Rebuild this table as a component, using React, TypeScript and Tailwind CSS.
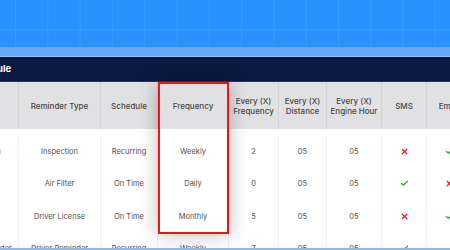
import { Check, X } from 'lucide-react';

type Row = {
    name: string;
    type: string;
    schedule: string;
    frequency: string;
    everyFreq: string;
    distance: string;
    engine: string;
    sms: boolean;
    email: boolean;
};

const rows: Row[] = [
    { name: 'Inspection Plan', type: 'Inspection', schedule: 'Recurring', frequency: 'Weekly', everyFreq: '2', distance: '05', engine: '05', sms: false, email: true },
    { name: 'Air Filter', type: 'Air Filter', schedule: 'On Time', frequency: 'Daily', everyFreq: '0', distance: '05', engine: '05', sms: true, email: false },
    { name: 'Renew License', type: 'Driver License', schedule: 'On Time', frequency: 'Monthly', everyFreq: '5', distance: '05', engine: '05', sms: false, email: true },
    { name: 'Fleet Driver Reminder', type: 'Driver Reminder', schedule: 'Recurring', frequency: 'Weekly', everyFreq: '7', distance: '05', engine: '05', sms: true, email: true },
];

const cols = 'grid grid-cols-[90px_82px_57px_71px_50px_48px_55px_45px_45px_60px]';

const Mark = ({ ok }: { ok: boolean }) =>
    ok ? (
        <Check className="w-[9px] h-[9px] text-[#3aa63a]" strokeWidth={3.5} />
    ) : (
        <X className="w-[9px] h-[9px] text-[#f01c1c]" strokeWidth={3.5} />
    );

const headers = ['Name', 'Reminder Type', 'Schedule', 'Frequency', 'Every (X)|Frequency', 'Every (X)|Distance', 'Every (X)|Engine Hour', 'SMS', 'Email', 'Action'];

export default function App() {
    return (
        <div className="w-[450px] h-[250px] overflow-hidden bg-white font-['Inter',sans-serif]">
            {/* blue hero with faint grid */}
            <div className="h-[47px] bg-[#2893fd] bg-[linear-gradient(to_right,rgba(255,255,255,0.08)_1px,transparent_1px),linear-gradient(to_bottom,rgba(255,255,255,0.08)_1px,transparent_1px)] bg-[size:32.3px_32px] bg-[position:15px_29px]" />
            <div className="h-[10px] bg-[#68a9f1] border-b border-[#8fc0f6]" />

            <div className="relative ml-[-71px]">
                <div className="h-[25px] bg-[#0a1940] flex items-center border-b border-[#26335a]">
                    <span className="ml-[-8px] text-white text-[9.5px] font-bold whitespace-nowrap">Reminder Schedule</span>
                </div>

                <div className="h-[166px] overflow-hidden">
                    <div className={`${cols} h-[47px] bg-[#e1e1e3] text-[8px] font-medium text-[#484848] leading-[10px]`}>
                        {headers.map((h, i) => {
                            const [a, b] = h.split('|');
                            return (
                                <div key={i} className="flex items-center justify-center text-center whitespace-nowrap border-r border-[#d3d3d6]">
                                    {b ? <span>{a}<br />{b}</span> : a}
                                </div>
                            );
                        })}
                    </div>
                    <div className="pt-[6px]">
                        {rows.map((r, i) => (
                            <div key={i} className={`${cols} h-[32.5px] text-[7.5px] text-[#505050]`}>
                                <div className="flex items-center justify-center whitespace-nowrap border-r border-[#f0f0f0]">{r.name}</div>
                                <div className="flex items-center justify-center whitespace-nowrap border-r border-[#f0f0f0]">{r.type}</div>
                                <div className="flex items-center justify-center border-r border-[#f0f0f0]">{r.schedule}</div>
                                <div className="flex items-center justify-center border-r border-[#f0f0f0]">{r.frequency}</div>
                                <div className="flex items-center justify-center border-r border-[#f0f0f0]">{r.everyFreq}</div>
                                <div className="flex items-center justify-center border-r border-[#f0f0f0]">{r.distance}</div>
                                <div className="flex items-center justify-center border-r border-[#f0f0f0]">{r.engine}</div>
                                <div className="flex items-center justify-center border-r border-[#f0f0f0]"><Mark ok={r.sms} /></div>
                                <div className="flex items-center justify-center border-r border-[#f0f0f0]"><Mark ok={r.email} /></div>
                                <div />
                            </div>
                        ))}
                    </div>
                </div>

                {/* highlighted column */}
                <div className="absolute left-[229px] top-[25px] w-[71px] h-[152px] border-2 border-[#ee1515] shadow-[0_0_18px_rgba(0,0,0,0.28)] pointer-events-none" />
            </div>

            <div className="h-[2px] bg-[#86bdf4]" />
        </div>
    );
}
